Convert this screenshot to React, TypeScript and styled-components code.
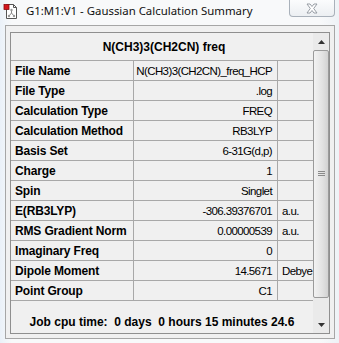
import styled, { createGlobalStyle } from 'styled-components';

const GlobalStyle = createGlobalStyle`
  html, body {
    margin: 0;
    padding: 0;
    width: 339px;
    height: 343px;
    overflow: hidden;
    background: #f4f6f8;
  }
`;

const rows: { label: string; value: string; unit?: string }[] = [
  { label: 'File Name', value: 'N(CH3)3(CH2CN)_freq_HCP' },
  { label: 'File Type', value: '.log' },
  { label: 'Calculation Type', value: 'FREQ' },
  { label: 'Calculation Method', value: 'RB3LYP' },
  { label: 'Basis Set', value: '6-31G(d,p)' },
  { label: 'Charge', value: '1' },
  { label: 'Spin', value: 'Singlet' },
  { label: 'E(RB3LYP)', value: '-306.39376701', unit: 'a.u.' },
  { label: 'RMS Gradient Norm', value: '0.00000539', unit: 'a.u.' },
  { label: 'Imaginary Freq', value: '0' },
  { label: 'Dipole Moment', value: '14.5671', unit: 'Debye' },
  { label: 'Point Group', value: 'C1' },
];

const Window = styled.div`
  width: 339px;
  height: 343px;
  display: flex;
  flex-direction: column;
  background: linear-gradient(90deg, #eaf1f8 0px, #f8f9fa 12px, #f8f9fa 320px, #eef2f6 339px);
  font-family: 'Liberation Sans', Arial, sans-serif;
  color: #000;
`;

const TitleBar = styled.div`
  height: 25px;
  display: flex;
  align-items: flex-start;
  position: relative;
`;

const AppIcon = styled.svg`
  margin: 3px 0 0 3px;
  flex: none;
`;

const Title = styled.div`
  font-family: 'Noto Sans', 'Open Sans', sans-serif;
  font-size: 11.4px;
  line-height: 16px;
  margin: 3px 0 0 7px;
  color: #111;
  white-space: nowrap;
`;

const CloseButton = styled.div`
  position: absolute;
  top: 0;
  left: 289px;
  width: 46px;
  height: 17px;
  box-sizing: border-box;
  border: 1px solid #a9b1ba;
  border-top: none;
  border-radius: 0 0 4px 4px;
  background: linear-gradient(#fbfcfd, #eceff2);
  display: flex;
  align-items: center;
  justify-content: center;
`;

const Client = styled.div`
  margin: 0 4px 0 5px;
  height: 314px;
  box-sizing: border-box;
  border: 1px solid #a6a6a6;
  background: #f0f0f0;
  padding: 6px 4px 4px 4px;
`;

const Panel = styled.div`
  height: 302px;
  box-sizing: border-box;
  border: 1px solid #8f8f8f;
  display: flex;
  background: #f0f0f0;
`;

const Sheet = styled.div`
  width: 302px;
  overflow: hidden;
  display: flex;
  flex-direction: column;
`;

const Header = styled.div`
  height: 27px;
  border-bottom: 1px solid #a8a8a8;
  display: flex;
  align-items: center;
  justify-content: center;
  font-weight: bold;
  font-size: 12px;
  padding-left: 4px;
`;

const Row = styled.div`
  display: grid;
  grid-template-columns: 123px 144px 50px;
  height: 20px;
  box-sizing: border-box;
  border-bottom: 1px solid #a8a8a8;
`;

const Cell = styled.div<{ $align?: 'left' | 'right'; $bold?: boolean; $last?: boolean }>`
  display: flex;
  align-items: center;
  box-sizing: border-box;
  border-right: ${({ $last }) => ($last ? 'none' : '1px solid #a8a8a8')};
  justify-content: ${({ $align }) => ($align === 'right' ? 'flex-end' : 'flex-start')};
  padding: ${({ $align }) => ($align === 'right' ? '0 5px 0 0' : '0 0 0 4px')};
  font-size: ${({ $bold }) => ($bold ? '12px' : '11.5px')};
  font-weight: ${({ $bold }) => ($bold ? 'bold' : 'normal')};
  letter-spacing: ${({ $bold }) => ($bold ? '-0.15px' : '-0.6px')};
  white-space: nowrap;
  overflow: hidden;
`;

const Footer = styled.div`
  flex: 1;
  overflow: hidden;
  padding: 13px 6px 0 6px;
  font-weight: bold;
  font-size: 12px;
  line-height: 16px;
  text-align: center;
  white-space: pre-wrap;
`;

const ScrollBar = styled.div`
  width: 16px;
  display: flex;
  flex-direction: column;
  background: #eaeaea;
`;

const ArrowButton = styled.div`
  height: 17px;
  display: flex;
  align-items: center;
  justify-content: center;
`;

const Thumb = styled.div`
  height: 248px;
  box-sizing: border-box;
  border: 1px solid #9a9a9a;
  border-radius: 2px;
  background: linear-gradient(90deg, #f2f2f2, #e2e2e2 60%, #d2d2d2);
  display: flex;
  align-items: center;
  justify-content: center;
`;

const Track = styled.div`
  flex: 1;
`;

export default function App() {
  return (
    <>
      <GlobalStyle />
      <Window>
        <TitleBar>
          <AppIcon width="16" height="17" viewBox="0 0 16 17">
            <path d="M3.5 1.5h7l3 3v11h-10z" fill="#fff" stroke="#555" />
            <path d="M10.5 1.5v3h3" fill="none" stroke="#555" />
            <line x1="8.5" y1="7" x2="8.5" y2="10" stroke="#888" strokeWidth="1" />
            <line x1="8.5" y1="10" x2="6" y2="13" stroke="#888" strokeWidth="1" />
            <line x1="8.5" y1="10" x2="11" y2="13" stroke="#888" strokeWidth="1" />
            <circle cx="8.5" cy="7" r="1.2" fill="#999" />
            <circle cx="6" cy="13" r="1.2" fill="#999" />
            <circle cx="11" cy="13" r="1.2" fill="#999" />
            <rect x="1" y="1.5" width="5" height="5" fill="#d4151c" stroke="#8a0c10" strokeWidth="0.8" />
          </AppIcon>
          <Title>G1:M1:V1 - Gaussian Calculation Summary</Title>
          <CloseButton>
            <svg width="12" height="11" viewBox="0 0 12 11">
              <path
                d="M1 1h3l2 2.5 2-2.5h3l-3.3 4.5 3.3 4.5h-3l-2-2.5-2 2.5h-3l3.3-4.5z"
                fill="#fff"
                stroke="#8c939b"
                strokeWidth="0.9"
                strokeLinejoin="round"
              />
            </svg>
          </CloseButton>
        </TitleBar>
        <Client>
          <Panel>
            <Sheet>
              <Header>N(CH3)3(CH2CN) freq</Header>
              {rows.map((r) => (
                <Row key={r.label}>
                  <Cell $bold>{r.label}</Cell>
                  <Cell $align="right">{r.value}</Cell>
                  <Cell $last>{r.unit ?? ''}</Cell>
                </Row>
              ))}
              <Footer>{'Job cpu time:  0 days  0 hours 15 minutes 24.6 seconds'}</Footer>
            </Sheet>
            <ScrollBar>
              <ArrowButton>
                <svg width="7" height="4" viewBox="0 0 7 4">
                  <path d="M0 4L3.5 0L7 4z" fill="#333" />
                </svg>
              </ArrowButton>
              <Thumb>
                <svg width="7" height="6" viewBox="0 0 7 6">
                  <path d="M0 0.5h7M0 2.5h7M0 4.5h7" stroke="#8a8a8a" strokeWidth="1" />
                </svg>
              </Thumb>
              <Track />
              <ArrowButton>
                <svg width="7" height="4" viewBox="0 0 7 4">
                  <path d="M0 0L3.5 4L7 0z" fill="#333" />
                </svg>
              </ArrowButton>
            </ScrollBar>
          </Panel>
        </Client>
      </Window>
    </>
  );
}
